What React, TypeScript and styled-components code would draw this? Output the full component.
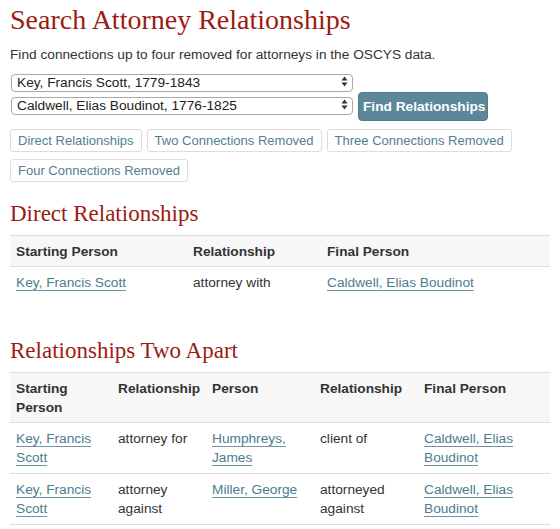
import React from "react";
import styled, { createGlobalStyle } from "styled-components";

const GlobalStyle = createGlobalStyle`
  html, body {
    margin: 0;
    padding: 0;
    background: #ffffff;
  }
  body {
    font-family: "Liberation Sans", Arial, Helvetica, sans-serif;
    font-size: 13.7px;
    line-height: 19px;
    color: #333333;
  }
  * { box-sizing: border-box; }
`;

const Page = styled.div`
  padding: 0 10px;
`;

const Title = styled.h1`
  margin: 4px 0 10px;
  font-family: "Liberation Serif", "Times New Roman", serif;
  font-weight: normal;
  font-size: 28px;
  line-height: 31px;
  color: #9b1c12;
`;

const SectionTitle = styled.h2`
  margin: 20px 0 9px;
  font-family: "Liberation Serif", "Times New Roman", serif;
  font-weight: normal;
  font-size: 23px;
  line-height: 24px;
  color: #9b1c12;
`;

const Intro = styled.p`
  margin: 0 0 9px;
`;

const SearchRow = styled.form`
  display: flex;
  align-items: flex-start;
  gap: 5px;
  margin: 0;
`;

const SelectStack = styled.div`
  display: flex;
  flex-direction: column;
  gap: 5px;
  width: 343px;
  padding-left: 1px;
`;

const SelectWrap = styled.div`
  position: relative;
  height: 18px;
`;

const NativeSelect = styled.select`
  appearance: none;
  -webkit-appearance: none;
  width: 100%;
  height: 18px;
  margin: 0;
  padding: 0 20px 0 5px;
  border: 1px solid #a9a9a9;
  border-radius: 4px;
  background: #ffffff;
  font-family: "Liberation Sans", Arial, sans-serif;
  font-size: 13.7px;
  line-height: 16px;
  color: #222222;
`;

const Arrows = styled.svg`
  position: absolute;
  right: 5px;
  top: 3px;
  pointer-events: none;
`;

const PrimaryButton = styled.button`
  margin-top: 19px;
  width: 130px;
  height: 29px;
  padding: 0 4px;
  border: 1px solid #4f7b8c;
  border-radius: 4px;
  background: #5b8799;
  color: #ffffff;
  font-family: "Liberation Sans", Arial, sans-serif;
  font-size: 13.7px;
  font-weight: bold;
  white-space: nowrap;
  cursor: pointer;
`;

const TabBar = styled.div`
  display: flex;
  flex-wrap: wrap;
  column-gap: 5px;
  row-gap: 7px;
  margin-top: 8px;
  width: 512px;
`;

const TabButton = styled.a`
  display: inline-block;
  padding: 2px 7px;
  line-height: 17px;
  font-size: 13px;
  color: #517f91;
  text-decoration: none;
  border: 1px solid #dddddd;
  border-radius: 3px;
  background: #ffffff;
`;

const Table = styled.table`
  width: 100%;
  border-collapse: collapse;
  table-layout: fixed;
  margin-bottom: 41px;

  &:last-of-type {
    margin-bottom: 0;
  }
`;

const Col = styled.col<{ $w: number }>`
  width: ${(p) => p.$w}px;
`;

const HeadRow = styled.tr`
  background: #f7f7f7;
  border-top: 1px solid #dddddd;
  border-bottom: 1px solid #dddddd;
`;

const Th = styled.th`
  padding: 6px 6px 5px;
  text-align: left;
  vertical-align: top;
  font-weight: bold;
  line-height: 19px;
  color: #333333;
`;

const BodyRow = styled.tr<{ $ruled?: boolean }>`
  border-bottom: ${(p) => (p.$ruled ? "1px solid #dddddd" : "none")};
`;

const Td = styled.td`
  padding: 6px 6px;
  vertical-align: top;
  line-height: 19px;
  color: #333333;
`;

const PersonLink = styled.a`
  color: #4d7c8f;
  text-decoration: underline;
  text-decoration-color: #6d95a4;
  text-underline-offset: 3px;
`;

const SelectArrows = () => (
  <Arrows width="7" height="11" viewBox="0 0 7 11">
    <path d="M3.5 0.5 L6.5 4.5 L0.5 4.5 Z" fill="#333" />
    <path d="M0.5 6.5 L6.5 6.5 L3.5 10.5 Z" fill="#333" />
  </Arrows>
);

const tabs = [
  "Direct Relationships",
  "Two Connections Removed",
  "Three Connections Removed",
  "Four Connections Removed",
];

const twoApart = [
  ["attorney for", "Humphreys, James", "client of"],
  ["attorney against", "Miller, George", "attorneyed against"],
];

export default function App() {
  return (
    <Page>
      <GlobalStyle />
      <Title>Search Attorney Relationships</Title>
      <Intro>Find connections up to four removed for attorneys in the OSCYS data.</Intro>
      <SearchRow onSubmit={(e) => e.preventDefault()}>
        <SelectStack>
          <SelectWrap>
            <NativeSelect defaultValue="key">
              <option value="key">Key, Francis Scott, 1779-1843</option>
            </NativeSelect>
            <SelectArrows />
          </SelectWrap>
          <SelectWrap>
            <NativeSelect defaultValue="caldwell">
              <option value="caldwell">Caldwell, Elias Boudinot, 1776-1825</option>
            </NativeSelect>
            <SelectArrows />
          </SelectWrap>
        </SelectStack>
        <PrimaryButton type="submit">Find Relationships</PrimaryButton>
      </SearchRow>
      <TabBar>
        {tabs.map((t) => (
          <TabButton key={t} href="#">
            {t}
          </TabButton>
        ))}
      </TabBar>

      <SectionTitle>Direct Relationships</SectionTitle>
      <Table>
        <colgroup>
          <Col $w={177} />
          <Col $w={134} />
          <Col $w={229} />
        </colgroup>
        <thead>
          <HeadRow>
            <Th>Starting Person</Th>
            <Th>Relationship</Th>
            <Th>Final Person</Th>
          </HeadRow>
        </thead>
        <tbody>
          <BodyRow>
            <Td>
              <PersonLink href="#">Key, Francis Scott</PersonLink>
            </Td>
            <Td>attorney with</Td>
            <Td>
              <PersonLink href="#">Caldwell, Elias Boudinot</PersonLink>
            </Td>
          </BodyRow>
        </tbody>
      </Table>

      <SectionTitle>Relationships Two Apart</SectionTitle>
      <Table>
        <colgroup>
          <Col $w={102} />
          <Col $w={94} />
          <Col $w={108} />
          <Col $w={104} />
          <Col $w={132} />
        </colgroup>
        <thead>
          <HeadRow>
            <Th>Starting Person</Th>
            <Th>Relationship</Th>
            <Th>Person</Th>
            <Th>Relationship</Th>
            <Th>Final Person</Th>
          </HeadRow>
        </thead>
        <tbody>
          {twoApart.map(([r1, person, r2]) => (
            <BodyRow key={person} $ruled>
              <Td>
                <PersonLink href="#">Key, Francis Scott</PersonLink>
              </Td>
              <Td>{r1}</Td>
              <Td>
                <PersonLink href="#">{person}</PersonLink>
              </Td>
              <Td>{r2}</Td>
              <Td>
                <PersonLink href="#">Caldwell, Elias Boudinot</PersonLink>
              </Td>
            </BodyRow>
          ))}
        </tbody>
      </Table>
    </Page>
  );
}
